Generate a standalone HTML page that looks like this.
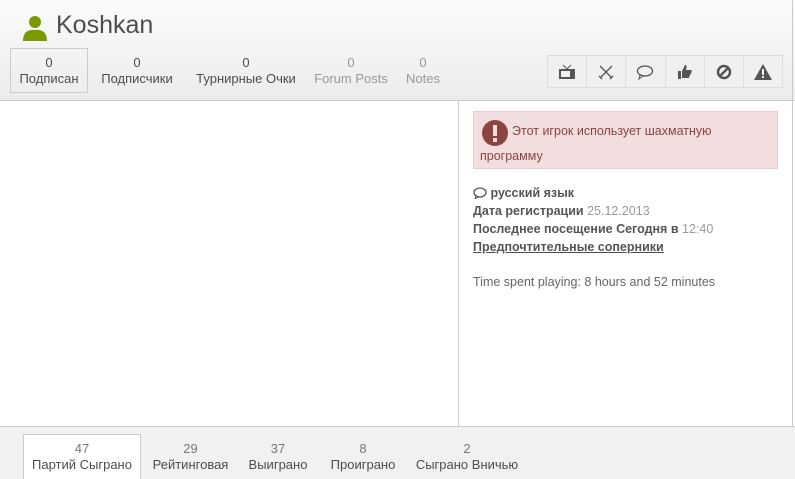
<!DOCTYPE html>
<html><head><meta charset="utf-8"><style>
*{margin:0;padding:0;box-sizing:border-box}
body{width:795px;height:479px;overflow:hidden;background:#fff;font-family:"Liberation Sans","Noto Sans CJK SC",sans-serif;color:#4d4d4d;position:relative}
.hdr{position:absolute;left:0;top:0;width:795px;height:101px;background:linear-gradient(#fbfbfb,#ececec);border-bottom:1px solid #ccc}
.title{position:absolute;left:56px;top:11px;font-size:25px;color:#4d4d4d}
.user{position:absolute;left:23px;top:15px}
.st{position:absolute;top:55px;text-align:center;font-size:13px;color:#4d4d4d;line-height:16px;white-space:nowrap}
.st.g{color:#999}
.st.sel{border:1px solid #ccc;height:45px;top:48px;padding-top:6px}
.btns{position:absolute;left:547px;top:55px;width:236px;height:33px;border:1px solid #ddd;display:flex;background:#f0f0f0}
.btns div{flex:1;border-right:1px solid #ddd;display:flex;align-items:center;justify-content:center}
.btns div:last-child{border-right:0}
.rb{position:absolute;left:792px;top:0;width:1px;height:479px;background:#ccc}
.vd{position:absolute;left:458px;top:101px;width:1px;height:326px;background:#ccc}
.alert{position:absolute;left:473px;top:111px;width:305px;height:58px;background:#f2dede;border:1px solid #ebcccc;font-size:12.5px;color:#8a4540}
.info{position:absolute;left:473px;font-size:12.5px;color:#4d4d4d;white-space:nowrap}
.info b{font-weight:bold;color:#555}
.gr{color:#999}
.bot{position:absolute;left:0;top:426px;width:795px;height:53px;background:#f1f1f1;border-top:1px solid #ccc}
.bs{position:absolute;top:441px;text-align:center;font-size:13px;line-height:16px;color:#4d4d4d;white-space:nowrap}
.bs .n{color:#777}
.tab{position:absolute;left:23px;top:434px;width:118px;height:45px;background:#fff;border:1px solid #ccc;border-bottom:0}
</style></head><body>
<div class="hdr"></div>
<svg class="user" width="24" height="26" viewBox="0 0 24 26"><circle cx="12" cy="7" r="6" fill="#7a9a01"/><path d="M0 26 Q0 14 12 15 Q24 14 24 26Z" fill="#7a9a01"/></svg>
<div class="title">Koshkan</div>
<div class="st sel" style="left:10px;width:78px">0<br>Подписан</div>
<div class="st" style="left:98px;width:78px">0<br>Подписчики</div>
<div class="st" style="left:192px;width:108px">0<br>Турнирные Очки</div>
<div class="st g" style="left:313px;width:76px">0<br>Forum Posts</div>
<div class="st g" style="left:403px;width:40px">0<br>Notes</div>
<div class="btns">
<div><svg width="18" height="16"><rect x="1" y="5" width="16" height="10" fill="#555"/><rect x="3" y="7" width="9" height="6" fill="#f0f0f0"/><path d="M5 1l4 4 4-4" stroke="#555" fill="none"/></svg></div>
<div><svg width="16" height="16"><path d="M2 2l12 12M14 2L2 14M1 12l3 3M15 12l-3 3" stroke="#555" stroke-width="1.3" fill="none"/></svg></div>
<div><svg width="18" height="16"><ellipse cx="9" cy="7" rx="7.5" ry="5" stroke="#555" stroke-width="1.3" fill="none"/><path d="M4 11l-1 4 4-3" stroke="#555" fill="none"/></svg></div>
<div><svg width="16" height="16"><path d="M1 7h3v8H1zM5 7l3-6c2 0 2 2 1 5h5c1 0 1 2 0 2 1 1 0 2-1 2 1 1 0 2-1 2 1 1 0 2-1 2H5z" fill="#555"/></svg></div>
<div><svg width="16" height="16"><circle cx="8" cy="8" r="6" stroke="#555" stroke-width="2.5" fill="none"/><path d="M4 12L12 4" stroke="#555" stroke-width="2.5"/></svg></div>
<div><svg width="18" height="16"><path d="M9 0L18 16H0z" fill="#555"/><rect x="8" y="5" width="2" height="6" fill="#f0f0f0"/><rect x="8" y="12" width="2" height="2" fill="#f0f0f0"/></svg></div>
</div>
<div class="rb"></div>
<div class="vd"></div>
<div class="alert">
<svg style="position:absolute;left:7px;top:7px" width="28" height="28"><circle cx="14" cy="14" r="13" fill="#8a4540"/><rect x="12" y="6" width="4" height="11" fill="#f2dede"/><rect x="12" y="19" width="4" height="4" fill="#f2dede"/></svg>
<div style="position:absolute;left:38px;top:12px">Этот игрок использует шахматную</div>
<div style="position:absolute;left:6px;top:37px">программу</div>
</div>
<div class="info" style="top:186px"><svg width="14" height="12" style="vertical-align:-2px"><ellipse cx="7" cy="5.5" rx="6" ry="4.5" stroke="#555" stroke-width="1.3" fill="none"/><path d="M3 9l-1 3 3-2" stroke="#555" fill="none"/></svg> <b>русский язык</b></div>
<div class="info" style="top:204px"><b>Дата регистрации</b> <span class="gr">25.12.2013</span></div>
<div class="info" style="top:222px"><b>Последнее посещение Сегодня в</b> <span class="gr">12:40</span></div>
<div class="info" style="top:240px;text-decoration:underline"><b>Предпочтительные соперники</b></div>
<div class="info" style="top:275px;color:#666">Time spent playing: 8 hours and 52 minutes</div>
<div class="bot"></div>
<div class="tab"></div>
<div class="bs" style="left:23px;width:118px"><span class="n">47</span><br>Партий Сыграно</div>
<div class="bs" style="left:148px;width:85px"><span class="n">29</span><br>Рейтинговая</div>
<div class="bs" style="left:243px;width:70px"><span class="n">37</span><br>Выиграно</div>
<div class="bs" style="left:323px;width:80px"><span class="n">8</span><br>Проиграно</div>
<div class="bs" style="left:412px;width:110px"><span class="n">2</span><br>Сыграно Вничью</div>
</body></html>
